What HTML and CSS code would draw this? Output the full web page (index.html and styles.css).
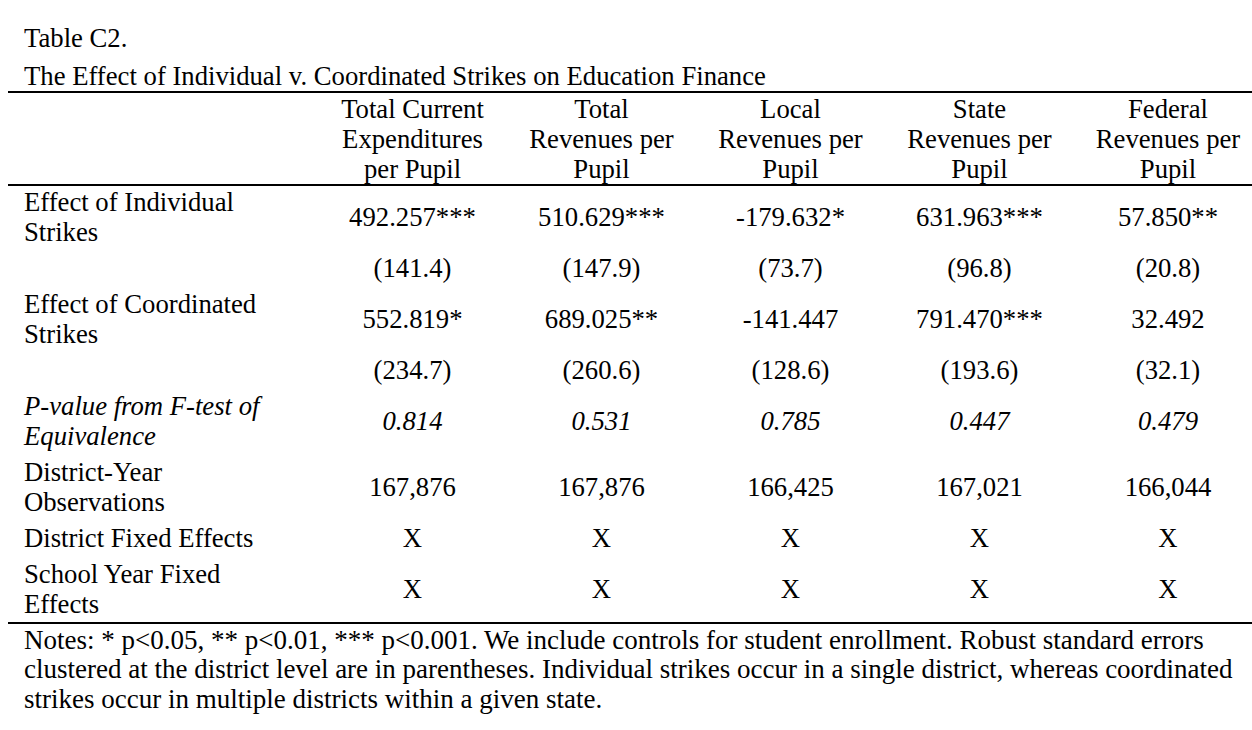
FILE: index.html
```html
<!DOCTYPE html>
<html lang="en">
<head>
<meta charset="utf-8">
<title>Table C2</title>
<link rel="stylesheet" href="styles.css">
</head>
<body>
<div class="doc">
  <p class="table-label">Table C2.</p>
  <p class="table-title">The Effect of Individual v. Coordinated Strikes on Education Finance</p>
  <table class="results">
    <colgroup>
      <col class="c-label">
      <col class="c-val">
      <col class="c-val">
      <col class="c-val">
      <col class="c-val">
      <col class="c-last">
    </colgroup>
    <thead>
      <tr>
        <th class="lbl"></th>
        <th>Total Current<br>Expenditures<br>per Pupil</th>
        <th>Total<br>Revenues per<br>Pupil</th>
        <th>Local<br>Revenues per<br>Pupil</th>
        <th>State<br>Revenues per<br>Pupil</th>
        <th class="last">Federal<br>Revenues per<br>Pupil</th>
      </tr>
    </thead>
    <tbody>
      <tr class="first">
        <td class="lbl">Effect of Individual<br>Strikes</td>
        <td>492.257***</td>
        <td>510.629***</td>
        <td>-179.632*</td>
        <td>631.963***</td>
        <td class="last">57.850**</td>
      </tr>
      <tr>
        <td class="lbl"></td>
        <td>(141.4)</td>
        <td>(147.9)</td>
        <td>(73.7)</td>
        <td>(96.8)</td>
        <td class="last">(20.8)</td>
      </tr>
      <tr>
        <td class="lbl">Effect of Coordinated<br>Strikes</td>
        <td>552.819*</td>
        <td>689.025**</td>
        <td>-141.447</td>
        <td>791.470***</td>
        <td class="last">32.492</td>
      </tr>
      <tr>
        <td class="lbl"></td>
        <td>(234.7)</td>
        <td>(260.6)</td>
        <td>(128.6)</td>
        <td>(193.6)</td>
        <td class="last">(32.1)</td>
      </tr>
      <tr class="italic">
        <td class="lbl">P-value from F-test of<br>Equivalence</td>
        <td>0.814</td>
        <td>0.531</td>
        <td>0.785</td>
        <td>0.447</td>
        <td class="last">0.479</td>
      </tr>
      <tr>
        <td class="lbl">District-Year<br>Observations</td>
        <td>167,876</td>
        <td>167,876</td>
        <td>166,425</td>
        <td>167,021</td>
        <td class="last">166,044</td>
      </tr>
      <tr>
        <td class="lbl">District Fixed Effects</td>
        <td>X</td>
        <td>X</td>
        <td>X</td>
        <td>X</td>
        <td class="last">X</td>
      </tr>
      <tr>
        <td class="lbl">School Year Fixed<br>Effects</td>
        <td>X</td>
        <td>X</td>
        <td>X</td>
        <td>X</td>
        <td class="last">X</td>
      </tr>
    </tbody>
  </table>
  <p class="notes">Notes: * p&lt;0.05, ** p&lt;0.01, *** p&lt;0.001. We include controls for student enrollment. Robust standard errors clustered at the district level are in parentheses. Individual strikes occur in a single district, whereas coordinated strikes occur in multiple districts within a given state.</p>
</div>
</body>
</html>
```

FILE: styles.css
```css
html, body {
  margin: 0;
  padding: 0;
  background: #ffffff;
}

body {
  padding: 8px 0 0 8px;
  font-family: "Liberation Serif", "Times New Roman", serif;
  font-size: 26.7px;
  line-height: 30px;
  color: #000000;
}

.doc {
  width: 1244px;
}

.table-label {
  margin: 15px 0 0 0;
  padding-left: 16px;
}

.table-title {
  margin: 8px 0 0 0;
  padding-left: 16px;
}

.results {
  width: 1244px;
  table-layout: fixed;
  border-collapse: collapse;
  border-top: 2px solid #000;
  border-bottom: 2px solid #000;
  font-size: 26.7px;
}

.c-label { width: 310px; }
.c-val { width: 189px; }
.c-last { width: 178px; }

.results th,
.results td {
  padding: 0;
  font-weight: normal;
  text-align: center;
  vertical-align: middle;
}

.results thead th {
  padding: 1px 0 0 0;
  border-bottom: 2px solid #000;
}

.results tbody td {
  padding: 3px 0;
}

.results tbody tr.first td {
  padding-top: 1px;
}

.results .lbl {
  text-align: left;
  padding-left: 16px;
}

.results .last {
  padding-left: 10px;
}

.results tr.italic td {
  font-style: italic;
}

.notes {
  margin: 0;
  padding: 2px 0 0 16px;
  font-size: 27px;
  line-height: 29.3px;
}
```
